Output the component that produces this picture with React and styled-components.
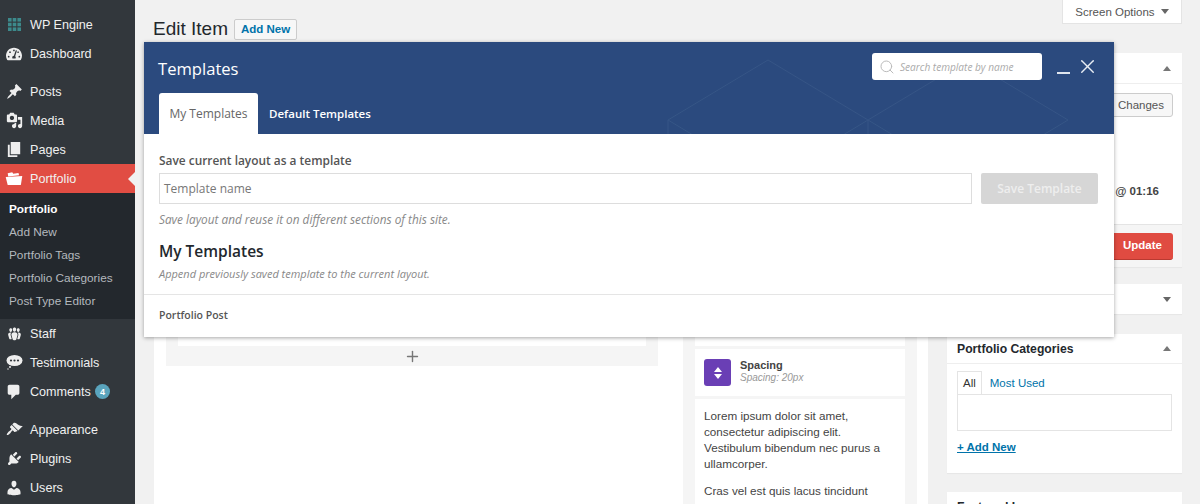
import React from "react";
import styled, { createGlobalStyle } from "styled-components";
import { FaTachometerAlt } from "react-icons/fa";
import { FiSearch, FiX, FiPlus } from "react-icons/fi";

const GlobalStyle = createGlobalStyle`
  html, body {
    margin: 0;
    height: 100%;
    overflow: hidden;
    background: #f1f1f1;
    font-family: "Liberation Sans", Arial, sans-serif;
    color: #444;
  }
  * { box-sizing: border-box; }
`;

const Page = styled.div`
  position: relative;
  display: flex;
  width: 1200px;
  height: 504px;
  overflow: hidden;
`;

/* left admin menu */
const Sidebar = styled.nav`
  width: 135px;
  flex-shrink: 0;
  background: #32373c;
  padding-top: 10px;
`;

const MenuItem = styled.div`
  position: relative;
  display: flex;
  align-items: center;
  height: 29px;
  margin-top: ${(p) => (p.$sep ? "9px" : "0")};
  background: ${(p) => (p.$active ? "#e14d43" : "transparent")};
  color: #f0f0f0;
  font-size: 12.6px;
  svg { flex-shrink: 0; }
`;

const IconSlot = styled.span`
  display: flex;
  justify-content: center;
  align-items: center;
  width: 30px;
  padding-right: 2px;
  font-size: 16px;
  color: #eee;
`;

const Notch = styled.span`
  position: absolute;
  right: 0;
  top: 8px;
  border: 7px solid transparent;
  border-left: 0;
  border-right-color: #f1f1f1;
`;

const Badge = styled.span`
  display: inline-flex;
  align-items: center;
  justify-content: center;
  width: 15px;
  height: 15px;
  margin-left: 4px;
  border-radius: 50%;
  background: #5aa4bd;
  color: #fff;
  font-size: 9px;
  font-weight: bold;
`;

const SubMenu = styled.div`
  background: #23282d;
  padding: 5px 0 6px 9px;
`;

const SubItem = styled.div`
  height: 23px;
  line-height: 23px;
  font-size: 11.8px;
  color: ${(p) => (p.$current ? "#fff" : "#b4b9be")};
  font-weight: ${(p) => (p.$current ? "bold" : "normal")};
`;

/* page behind the modal */
const Main = styled.main`
  flex: 1;
  min-width: 0;
  padding: 0 18px 0 19px;
`;

const TopBar = styled.div`
  display: flex;
  justify-content: space-between;
  align-items: flex-start;
  height: 53px;
`;

const Heading = styled.div`
  display: flex;
  align-items: center;
  gap: 6px;
  padding-top: 18px;
`;

const Title = styled.h1`
  margin: 0 0 0 -1px;
  font-size: 19px;
  font-weight: normal;
  color: #23282d;
`;

const AddNew = styled.a`
  display: block;
  width: 63px;
  height: 21px;
  line-height: 19px;
  text-align: center;
  font-size: 11.5px;
  font-weight: bold;
  color: #0073aa;
  background: #f7f7f7;
  border: 1px solid #ccc;
  border-radius: 2px;
`;

const ScreenOptions = styled.div`
  display: flex;
  align-items: center;
  justify-content: center;
  gap: 6px;
  width: 120px;
  height: 24px;
  background: #fff;
  border: 1px solid #e4e4e4;
  border-top: 0;
  font-size: 11.5px;
  color: #555;
`;

const Caret = styled.span`
  width: 0;
  height: 0;
  border-left: 4px solid transparent;
  border-right: 4px solid transparent;
  border-top: ${(p) => (p.$up ? "0" : "5px solid #666")};
  border-bottom: ${(p) => (p.$up ? "5px solid #777" : "0")};
`;

const Columns = styled.div`
  display: flex;
  justify-content: space-between;
  align-items: flex-start;
`;

const EditorBox = styled.section`
  display: flex;
  width: 774px;
  height: 480px;
  background: #fff;
`;

const EditorLeft = styled.div`
  width: 529px;
  padding: 0 25px 0 12px;
`;

const Canvas = styled.div`
  height: 313px;
  padding: 0 12px;
  background: #f5f5f5;
`;

const CanvasCard = styled.div`
  height: 293px;
  background: #fff;
`;

const AddRow = styled.div`
  display: flex;
  justify-content: center;
  align-items: center;
  height: 20px;
  color: #777;
  font-size: 17px;
`;

const Palette = styled.div`
  display: flex;
  flex-direction: column;
  gap: 3px;
  width: 234px;
  height: 100%;
  padding: 0 12px;
  background: #f5f5f5;
`;

const PaletteCard = styled.div`
  flex: ${(p) => (p.$grow ? "1" : "none")};
  height: ${(p) => p.$h || "auto"};
  background: #fff;
`;

const SpacingCard = styled(PaletteCard)`
  display: flex;
  align-items: center;
  gap: 9px;
  padding: 0 9px;
`;

const SpacingIcon = styled.span`
  display: flex;
  align-items: center;
  justify-content: center;
  width: 27px;
  height: 27px;
  border-radius: 3px;
  background: #6a3fb5;
`;

const CardText = styled.div`
  padding-bottom: 2px;
`;

const CardTitle = styled.div`
  font-size: 11px;
  font-weight: bold;
  color: #444;
  line-height: 13px;
`;

const CardSub = styled.div`
  margin-top: -1px;
  font-size: 10px;
  font-style: italic;
  color: #999;
  line-height: 13px;
`;

const Lorem = styled.p`
  margin: 0 0 11px;
  padding: 0 9px;
  font-size: 11.7px;
  line-height: 16px;
  color: #444;
  &:first-child { padding-top: 9px; }
`;

const SideCol = styled.aside`
  width: 235px;
`;

const Box = styled.section`
  height: ${(p) => p.$h};
  margin-bottom: ${(p) => p.$mb || "0"};
  background: #fff;
  box-shadow: 0 1px 1px rgba(0, 0, 0, 0.04);
`;

const PublishBox = styled(Box)`
  display: flex;
  flex-direction: column;
`;

const BoxHead = styled.div`
  display: flex;
  justify-content: space-between;
  align-items: center;
  height: ${(p) => p.$h || "30px"};
  padding: 0 11px 0 10px;
  border-bottom: ${(p) => (p.$plain ? "0" : "1px solid #eee")};
  font-size: 12.2px;
  font-weight: bold;
  color: #23282d;
`;

const PublishBody = styled.div`
  flex: 1;
  padding: 9px 9px 0;
`;

const PreviewButton = styled.div`
  width: 90px;
  height: 24px;
  margin-left: auto;
  line-height: 22px;
  padding-right: 8px;
  text-align: right;
  font-size: 11.5px;
  color: #555;
  background: #f7f7f7;
  border: 1px solid #ccc;
  border-radius: 3px;
`;

const PublishDate = styled.div`
  margin-top: 68px;
  text-align: right;
  padding-right: 14px;
  font-size: 11.5px;
  font-weight: bold;
  color: #444;
`;

const PublishFoot = styled.div`
  display: flex;
  justify-content: flex-end;
  align-items: center;
  height: 43px;
  padding: 0 9px;
  background: #f5f5f5;
  border-top: 1px solid #e4e4e4;
`;

const UpdateButton = styled.div`
  width: 70px;
  height: 27px;
  line-height: 25px;
  padding-right: 11px;
  text-align: right;
  color: #fff;
  font-size: 11.5px;
  font-weight: bold;
  background: #e04b41;
  border-bottom: 1px solid #b93a31;
  border-radius: 3px;
`;

const CatBody = styled.div`
  padding: 8px 10px 0;
`;

const CatTabs = styled.div`
  display: flex;
  align-items: flex-end;
  height: 22px;
`;

const CatTab = styled.div`
  position: relative;
  z-index: 1;
  height: ${(p) => (p.$active ? "23px" : "22px")};
  line-height: 22px;
  padding: 0 ${(p) => (p.$active ? "5px" : "8px")};
  font-size: 11.5px;
  color: ${(p) => (p.$active ? "#333" : "#0073aa")};
  background: #fff;
  border: ${(p) => (p.$active ? "1px solid #e4e4e4" : "0")};
  border-bottom: 0;
`;

const CatPanel = styled.div`
  height: 37px;
  border: 1px solid #e4e4e4;
`;

const AddCategory = styled.a`
  display: block;
  margin-top: 10px;
  font-size: 11.5px;
  font-weight: bold;
  color: #0073aa;
  text-decoration: underline;
`;

/* templates modal */
const Modal = styled.div`
  position: absolute;
  left: 144px;
  top: 42px;
  width: 970px;
  height: 295px;
  background: #fff;
  box-shadow: 0 1px 4px rgba(0, 0, 0, 0.35);
  font-family: "Open Sans", sans-serif;
`;

const ModalHead = styled.header`
  position: relative;
  height: 92px;
  overflow: hidden;
  background: #2b4a7e;
`;

const Pattern = styled.svg`
  position: absolute;
  inset: 0;
  fill: none;
  stroke: #365586;
  stroke-width: 1;
`;

const HeadTop = styled.div`
  position: relative;
  display: flex;
  align-items: flex-start;
  padding: 12px 15px 0 14px;
  height: 51px;
`;

const ModalTitle = styled.div`
  flex: 1;
  padding-top: 1px;
  font-size: 16.6px;
  line-height: 28px;
  color: #fff;
`;

const SearchBox = styled.div`
  display: flex;
  align-items: center;
  gap: 5px;
  width: 170px;
  height: 27px;
  margin: -1px 15px 0 0;
  padding-left: 7px;
  border-radius: 3px;
  background: #fff;
  color: #aaa;
  font-size: 10.1px;
  font-style: italic;
  svg { font-size: 16px; color: #bbb; stroke-width: 1.5; }
`;

const Minimize = styled.span`
  width: 13px;
  height: 2px;
  margin: 18px 6px 0 0;
  background: #dfe5ee;
`;

const CloseIcon = styled.span`
  display: flex;
  margin-top: 1px;
  color: #e8edf4;
  font-size: 23px;
  svg { stroke-width: 1.5; }
`;

const TabRow = styled.div`
  position: relative;
  display: flex;
  height: 41px;
  padding-left: 15px;
`;

const Tab = styled.div`
  width: ${(p) => (p.$active ? "99px" : "auto")};
  padding: 0 ${(p) => (p.$active ? "0" : "11px")};
  line-height: 41px;
  text-align: center;
  font-size: ${(p) => (p.$active ? "12px" : "11.5px")};
  font-weight: ${(p) => (p.$active ? "normal" : "600")};
  color: ${(p) => (p.$active ? "#666" : "#fff")};
  background: ${(p) => (p.$active ? "#fff" : "transparent")};
  border-radius: 3px 3px 0 0;
`;

const ModalBody = styled.div`
  padding: 17px 16px 0 15px;
`;

const Label = styled.div`
  font-size: 11.9px;
  line-height: 18px;
  font-weight: 600;
  color: #555;
`;

const SaveRow = styled.div`
  display: flex;
  gap: 9px;
  margin-top: 4px;
`;

const NameField = styled.div`
  flex: 1;
  height: 31px;
  line-height: 29px;
  padding-left: 4px;
  border: 1px solid #ddd;
  font-size: 12px;
  color: #777;
`;

const SaveButton = styled.div`
  width: 117px;
  height: 31px;
  line-height: 31px;
  text-align: center;
  font-size: 12px;
  font-weight: 600;
  color: #eee;
  background: #d6d6d6;
  border-radius: 2px;
`;

const Help = styled.div`
  margin-top: ${(p) => p.$mt || "0"};
  font-size: ${(p) => p.$size || "11.8px"};
  line-height: 16px;
  font-style: italic;
  color: #888;
`;

const SectionTitle = styled.h2`
  margin: 13px 0 0;
  font-size: 15.5px;
  line-height: 22px;
  font-weight: 600;
  color: #23282d;
`;

const ModalFoot = styled.div`
  margin-top: 12px;
  padding: 12px 15px 0;
  border-top: 1px solid #e5e5e5;
  font-size: 10.5px;
  line-height: 16px;
  font-weight: 600;
  color: #555;
`;

const Dash = ({ d, size = 17 }) => (
  <svg width={size} height={size} viewBox="0 0 20 20" fill="currentColor">
    <path d={d} />
  </svg>
);

const WpEngineIcon = () => (
  <svg width="13" height="13" viewBox="0 0 13 13" fill="#3d8a8c">
    {[0, 4.7, 9.4].map((y) =>
      [0, 4.7, 9.4].map((x) => <rect key={`${x}-${y}`} x={x} y={y} width="3.6" height="3.6" />)
    )}
  </svg>
);

const FolderIcon = () => (
  <svg width="18" height="18" viewBox="0 0 20 20" fill="#fff">
    <path d="M3 3.5l5-1 1.2 1.6L15 3.2l.6 2.6L3.6 7.2z" />
    <path d="M.8 7.8l18.4-1.2-1.6 10.2H3z" />
  </svg>
);

const BubbleIcon = () => (
  <svg width="17" height="17" viewBox="0 0 17 17">
    <ellipse cx="8.5" cy="6.5" rx="8" ry="5.6" fill="#eee" />
    <circle cx="5" cy="6.5" r="1.1" fill="#32373c" />
    <circle cx="8.5" cy="6.5" r="1.1" fill="#32373c" />
    <circle cx="12" cy="6.5" r="1.1" fill="#32373c" />
    <circle cx="4" cy="13" r="1" fill="#eee" />
    <circle cx="2" cy="15" r="0.7" fill="#eee" />
  </svg>
);

const SpacingGlyph = () => (
  <svg width="8" height="12" viewBox="0 0 8 12" fill="#fff">
    <path d="M4 0l4 5H0zM4 12L0 7h8z" />
  </svg>
);

const paths = {
  post: "M10.44 3.02l1.82-1.82 6.36 6.35-1.83 1.82c-1.05-.68-2.48-.57-3.41.36l-.75.75c-.92.93-1.04 2.35-.35 3.41l-1.83 1.82-2.41-2.41-2.8 2.79c-.42.42-3.38 2.71-3.8 2.29s1.86-3.39 2.28-3.81l2.79-2.79L4.1 9.36l1.83-1.82c1.05.69 2.48.57 3.4-.36l.75-.75c.93-.92 1.05-2.35.36-3.41z",
  media: "M13 11V4c0-.55-.45-1-1-1h-1.67L9 1H5L3.67 3H2c-.55 0-1 .45-1 1v7c0 .55.45 1 1 1h10c.55 0 1-.45 1-1zM7 4.5c1.38 0 2.5 1.12 2.5 2.5S8.38 9.5 7 9.5 4.5 8.38 4.5 7 5.62 4.5 7 4.5zM14 6h5v10.5c0 1.38-1.12 2.5-2.5 2.5S14 17.88 14 16.5s1.12-2.5 2.5-2.5c.17 0 .34.02.5.05V9h-3V6zm-4 8.05V13h2v3.5c0 1.38-1.12 2.5-2.5 2.5S7 17.88 7 16.5 8.12 14 9.5 14c.17 0 .34.02.5.05z",
  page: "M6 15V2h10v13H6zm-1 1h8v2H3V5h2v11z",
  staff: "M8.03 4.46c-.29 1.28.55 3.46 1.97 3.46 1.41 0 2.25-2.18 1.96-3.46-.22-.98-1.08-1.63-1.96-1.63-.89 0-1.74.65-1.97 1.63zm-4.13.9c-.25 1.08.47 2.93 1.67 2.93s1.92-1.85 1.67-2.93c-.19-.83-.92-1.39-1.67-1.39s-1.48.56-1.67 1.39zm8.86 0c-.25 1.08.47 2.93 1.66 2.93 1.2 0 1.92-1.85 1.67-2.93-.19-.83-.92-1.39-1.67-1.39-.74 0-1.47.56-1.66 1.39zm-.59 11.43l1.25-4.3C14.2 10 12.71 8.47 10 8.47c-2.72 0-4.21 1.53-3.44 4.02l1.26 4.3C8.05 17.51 9 18 10 18c.98 0 1.94-.49 2.17-1.21zm-6.1-7.63c-.49.67-.96 1.83-.42 3.59l1.12 3.79c-.34.2-.77.31-1.2.31-.85 0-1.65-.41-1.85-1.03l-1.07-3.65c-.65-2.11.61-3.4 2.92-3.4.27 0 .54.02.79.06-.1.1-.2.22-.29.33zm8.35-.39c2.31 0 3.58 1.29 2.92 3.4l-1.07 3.65c-.2.62-1 1.03-1.85 1.03-.43 0-.86-.11-1.2-.31l1.11-3.77c.55-1.78.08-2.94-.42-3.61-.08-.11-.18-.23-.28-.33.25-.04.51-.06.79-.06z",
  comment: "M5 2h9c1.1 0 2 .9 2 2v7c0 1.1-.9 2-2 2h-2l-5 5v-5H5c-1.1 0-2-.9-2-2V4c0-1.1.9-2 2-2z",
  brush: "M14.48 11.06L7.41 3.99l1.5-1.5c.5-.56 2.3-.47 3.51.32 1.21.8 1.43 1.28 2.91 2.1 1.18.64 2.45 1.26 4.45.85zM13.77 11.77L6.7 4.7 4.93 6.47c-.39.39-.39 1.02 0 1.41l1.06 1.06c.39.39.39 1.03 0 1.42-.6.6-1.43 1.11-2.21 1.69-.35.26-.7.53-1.01.84-1.4 1.4-2.2 3-1.7 3.5s2.1-.3 3.5-1.7c.31-.31.58-.66.84-1.01.58-.78 1.09-1.61 1.69-2.21.39-.39 1.03-.39 1.42 0l1.06 1.06c.39.39 1.02.39 1.41 0z",
  plug: "M13.11 4.36L9.87 7.6 8 5.73l3.24-3.24c.35-.34 1.05-.2 1.56.32.52.51.66 1.21.31 1.55zm-8 1.77l.91-1.12 9.01 9.01-1.19.84c-.71.71-2.63 1.16-3.82 1.16H6.14L4.9 17.26c-.59.59-1.54.59-2.12 0-.59-.58-.59-1.53 0-2.12l1.24-1.24v-3.88c0-1.13.4-3.19 1.09-3.89zm7.26 3.97l3.24-3.24c.34-.35 1.04-.21 1.55.31.52.51.66 1.21.31 1.55l-3.24 3.25z",
  user: "M10 9.25c-2.27 0-2.73-3.44-2.73-3.44C7 4.02 7.82 2 9.97 2c2.16 0 2.98 2.02 2.71 3.81 0 0-.41 3.44-2.68 3.44zm0 2.57L12.72 10c2.39 0 4.52 2.33 4.52 4.53v2.49s-3.65 1.13-7.24 1.13c-3.65 0-7.24-1.13-7.24-1.13v-2.49c0-2.25 1.94-4.48 4.47-4.48z",
};

const menuTop = [
  { label: "WP Engine", icon: <WpEngineIcon /> },
  { label: "Dashboard", icon: <FaTachometerAlt /> },
  { label: "Posts", icon: <Dash d={paths.post} />, sep: true },
  { label: "Media", icon: <Dash d={paths.media} /> },
  { label: "Pages", icon: <Dash d={paths.page} size={19} /> },
];

const subItems = ["Add New", "Portfolio Tags", "Portfolio Categories", "Post Type Editor"];

const menuBottom = [
  { label: "Staff", icon: <Dash d={paths.staff} /> },
  { label: "Testimonials", icon: <BubbleIcon /> },
  { label: "Comments", icon: <Dash d={paths.comment} size={18} />, badge: 4 },
  { label: "Appearance", icon: <Dash d={paths.brush} />, sep: true },
  { label: "Plugins", icon: <Dash d={paths.plug} /> },
  { label: "Users", icon: <Dash d={paths.user} size={18} /> },
];

function renderItem(item) {
  return (
    <MenuItem key={item.label} $sep={item.sep}>
      <IconSlot>{item.icon}</IconSlot>
      {item.label}
      {item.badge && <Badge>{item.badge}</Badge>}
    </MenuItem>
  );
}

export default function App() {
  return (
    <Page>
      <GlobalStyle />
      <Sidebar>
        {menuTop.map(renderItem)}
        <MenuItem $active>
          <IconSlot><FolderIcon /></IconSlot>
          Portfolio
          <Notch />
        </MenuItem>
        <SubMenu>
          <SubItem $current>Portfolio</SubItem>
          {subItems.map((s) => <SubItem key={s}>{s}</SubItem>)}
        </SubMenu>
        {menuBottom.map(renderItem)}
      </Sidebar>

      <Main>
        <TopBar>
          <Heading>
            <Title>Edit Item</Title>
            <AddNew>Add New</AddNew>
          </Heading>
          <ScreenOptions>Screen Options <Caret /></ScreenOptions>
        </TopBar>
        <Columns>
          <EditorBox>
            <EditorLeft>
              <Canvas><CanvasCard /><AddRow><FiPlus /></AddRow></Canvas>
            </EditorLeft>
            <Palette>
              <PaletteCard $h="293px" />
              <SpacingCard $h="47px">
                <SpacingIcon><SpacingGlyph /></SpacingIcon>
                <CardText>
                  <CardTitle>Spacing</CardTitle>
                  <CardSub>Spacing: 20px</CardSub>
                </CardText>
              </SpacingCard>
              <PaletteCard $grow>
                <Lorem>Lorem ipsum dolor sit amet, consectetur adipiscing elit. Vestibulum bibendum nec purus a ullamcorper.</Lorem>
                <Lorem>Cras vel est quis lacus tincidunt</Lorem>
              </PaletteCard>
            </Palette>
          </EditorBox>
          <SideCol>
            <PublishBox $h="214px" $mb="17px">
              <BoxHead $h="31px">&nbsp;<Caret $up /></BoxHead>
              <PublishBody>
                <PreviewButton>Changes</PreviewButton>
                <PublishDate>@ 01:16</PublishDate>
              </PublishBody>
              <PublishFoot><UpdateButton>Update</UpdateButton></PublishFoot>
            </PublishBox>
            <Box $h="30px" $mb="20px">
              <BoxHead $plain>&nbsp;<Caret /></BoxHead>
            </Box>
            <Box $h="139px" $mb="19px">
              <BoxHead>Portfolio Categories <Caret $up /></BoxHead>
              <CatBody>
                <CatTabs>
                  <CatTab $active>All</CatTab>
                  <CatTab>Most Used</CatTab>
                </CatTabs>
                <CatPanel />
                <AddCategory>+ Add New</AddCategory>
              </CatBody>
            </Box>
            <Box $h="60px">
              <BoxHead $plain>Featured Image</BoxHead>
            </Box>
          </SideCol>
        </Columns>
      </Main>

      <Modal>
        <ModalHead>
          <Pattern width="970" height="92" viewBox="0 0 970 92">
            <path d="M524 78L624 18L724 78L824 18L924 78L824 138L724 78L624 138L524 78M524 78V100M724 78V100" />
          </Pattern>
          <HeadTop>
            <ModalTitle>Templates</ModalTitle>
            <SearchBox><FiSearch />Search template by name</SearchBox>
            <Minimize />
            <CloseIcon><FiX /></CloseIcon>
          </HeadTop>
          <TabRow>
            <Tab $active>My Templates</Tab>
            <Tab>Default Templates</Tab>
          </TabRow>
        </ModalHead>
        <ModalBody>
          <Label>Save current layout as a template</Label>
          <SaveRow>
            <NameField>Template name</NameField>
            <SaveButton>Save Template</SaveButton>
          </SaveRow>
          <Help $mt="7px">Save layout and reuse it on different sections of this site.</Help>
          <SectionTitle>My Templates</SectionTitle>
          <Help $mt="4px" $size="11px">Append previously saved template to the current layout.</Help>
        </ModalBody>
        <ModalFoot>Portfolio Post</ModalFoot>
      </Modal>
    </Page>
  );
}
